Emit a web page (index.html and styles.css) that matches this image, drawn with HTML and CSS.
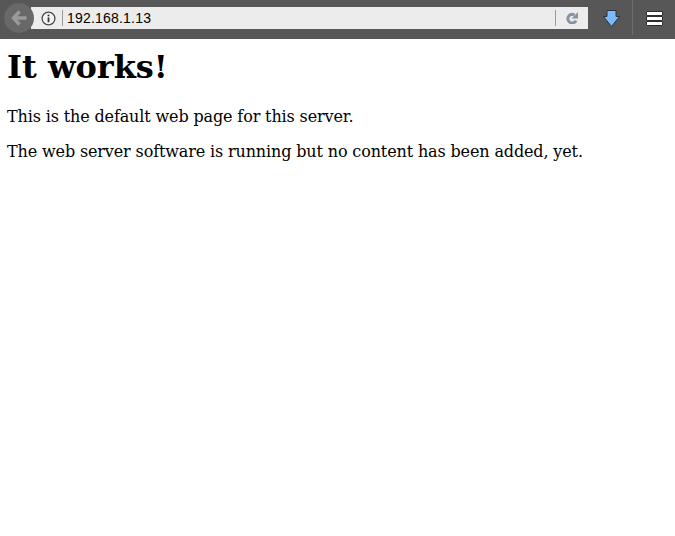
FILE: index.html
```html
<!DOCTYPE html>
<html lang="en">
<head>
<meta charset="utf-8">
<title>It works!</title>
<link rel="stylesheet" href="styles.css">
</head>
<body>
<header class="toolbar">
  <button class="back" aria-label="Back">
    <svg width="16" height="16" viewBox="0 0 16 16"><path d="M8.5 1.5 2.5 8 8.5 14.5M3.5 8H15.5" fill="none" stroke="#9a9a9a" stroke-width="3.4"/></svg>
  </button>
  <div class="urlbar">
    <svg class="info" width="15" height="15" viewBox="0 0 15 15"><circle cx="7.5" cy="7.5" r="6.4" fill="#f4f4f4" stroke="#4a4a4a" stroke-width="1.3"/><rect x="6.6" y="6.4" width="1.8" height="4.8" fill="#333"/><rect x="6.6" y="3.6" width="1.8" height="1.7" fill="#333"/></svg>
    <span class="sep"></span>
    <span class="url">192.168.1.13</span>
    <span class="sep sep-right"></span>
    <svg class="reload" width="12" height="12" viewBox="0 0 12 12"><path d="M10 8.6A4.3 4.3 0 1 1 8.4 3" fill="none" stroke="#8494a2" stroke-width="3"/><path d="M12 0V6.5H5.5Z" fill="#8494a2"/></svg>
  </div>
  <div class="download">
    <svg width="17" height="17" viewBox="0 0 17 17"><path d="M4 .5H13V6.5H16.5L8.5 16.5 .5 6.5H4Z" fill="#78bcff" stroke="#2a3540" stroke-width="1"/></svg>
  </div>
  <span class="divider"></span>
  <div class="menu"><span></span><span></span><span></span></div>
</header>
<main class="page">
  <h1>It works!</h1>
  <p>This is the default web page for this server.</p>
  <p>The web server software is running but no content has been added, yet.</p>
</main>
</body>
</html>
```

FILE: styles.css
```css
html, body { margin: 0; padding: 0; background: #fff; }
body { font-family: "DejaVu Serif", serif; color: #000; }
.toolbar {
  height: 39px;
  box-sizing: border-box;
  background: #575757;
  display: flex;
  align-items: center;
  padding: 0 0 3px 4px;
}
.back {
  width: 30px;
  height: 30px;
  border-radius: 50%;
  border: 0;
  padding: 0;
  background: #686868;
  display: flex;
  align-items: center;
  justify-content: center;
  flex: none;
  position: relative;
  z-index: 1;
}
.urlbar {
  width: 557px;
  height: 22px;
  margin-left: -3px;
  background: #ececec;
  display: flex;
  align-items: center;
  padding-left: 10px;
  box-sizing: border-box;
  flex: none;
}
.info { flex: none; }
.sep { width: 1px; height: 16px; background: #9a9a9a; margin-left: 6px; flex: none; }
.url { font: 14px "Liberation Sans", sans-serif; letter-spacing: 0.2px; margin-left: 4px; color: #000; flex: 1; }
.sep-right { margin-left: 0; }
.reload { margin: 0 10px; flex: none; }
.download { width: 17px; height: 17px; margin-left: 15px; flex: none; }
.divider { width: 1px; height: 35px; background: #6e6e6e; margin-left: 12px; flex: none; align-self: flex-start; }
.menu { display: flex; flex-direction: column; margin-left: 13px; }
.menu span { display: block; width: 15px; height: 3px; background: #fff; border: 1px solid #2e2e2e; border-radius: 1px; }
.page { padding: 0 7px; }
h1 { font-size: 32px; line-height: 38px; font-weight: 700; margin: 9px 0 21px; }
p { font-size: 16px; line-height: 19px; letter-spacing: -0.135px; margin: 16px 0 0; }
```
